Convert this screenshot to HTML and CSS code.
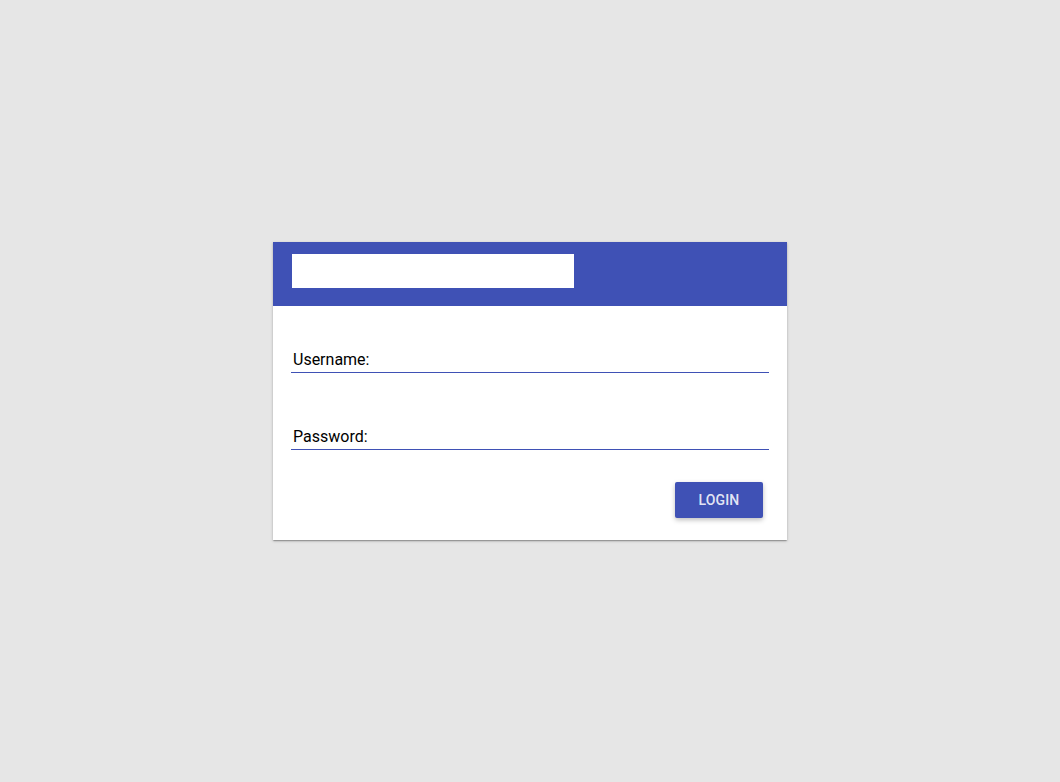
FILE: index.html
```html
<!DOCTYPE html>
<html>
<head>
<meta charset="utf-8">
<link rel="stylesheet" href="styles.css">
</head>
<body>
<div class="card">
  <div class="card-header">
    <div class="logo-box"></div>
  </div>
  <div class="card-body">
    <div class="field field-user"><span class="label">Username:</span></div>
    <div class="field field-pass"><span class="label">Password:</span></div>
    <div class="actions">
      <button class="btn">LOGIN</button>
    </div>
  </div>
</div>
</body>
</html>
```

FILE: styles.css
```css
html, body {
  margin: 0;
  padding: 0;
  height: 100%;
}
body {
  background: #e6e6e6;
  font-family: Roboto, "Liberation Sans", sans-serif;
  display: flex;
  align-items: center;
  justify-content: center;
}
.card {
  width: 514px;
  height: 298px;
  background: #fff;
  box-shadow: 0 1px 3px rgba(0,0,0,0.2), 0 1px 1px rgba(0,0,0,0.14), 0 2px 1px -1px rgba(0,0,0,0.12);
  display: flex;
  flex-direction: column;
}
.card-header {
  height: 64px;
  background: #3f51b5;
  padding: 12px 0 0 19px;
  box-sizing: border-box;
}
.logo-box {
  width: 282px;
  height: 34px;
  background: #fff;
}
.card-body {
  padding: 44px 18px 0 18px;
  display: flex;
  flex-direction: column;
}
.field {
  border-bottom: 1px solid #3f51b5;
  padding: 0 0 3px 2px;
  height: 19px;
}
.field-pass {
  margin-top: 54px;
}
.label {
  font-size: 16px;
  line-height: 19px;
  color: #000;
  display: block;
}
.actions {
  display: flex;
  justify-content: flex-end;
  margin-top: 32px;
  padding-right: 6px;
}
.btn {
  width: 88px;
  height: 36px;
  border: none;
  border-radius: 2px;
  background: #3f51b5;
  color: rgba(255,255,255,0.87);
  font-family: Roboto, "Liberation Sans", sans-serif;
  font-size: 14px;
  font-weight: 500;
  letter-spacing: 0.01em;
  box-shadow: 0 2px 5px 0 rgba(0,0,0,0.26);
  padding: 0;
}
```
